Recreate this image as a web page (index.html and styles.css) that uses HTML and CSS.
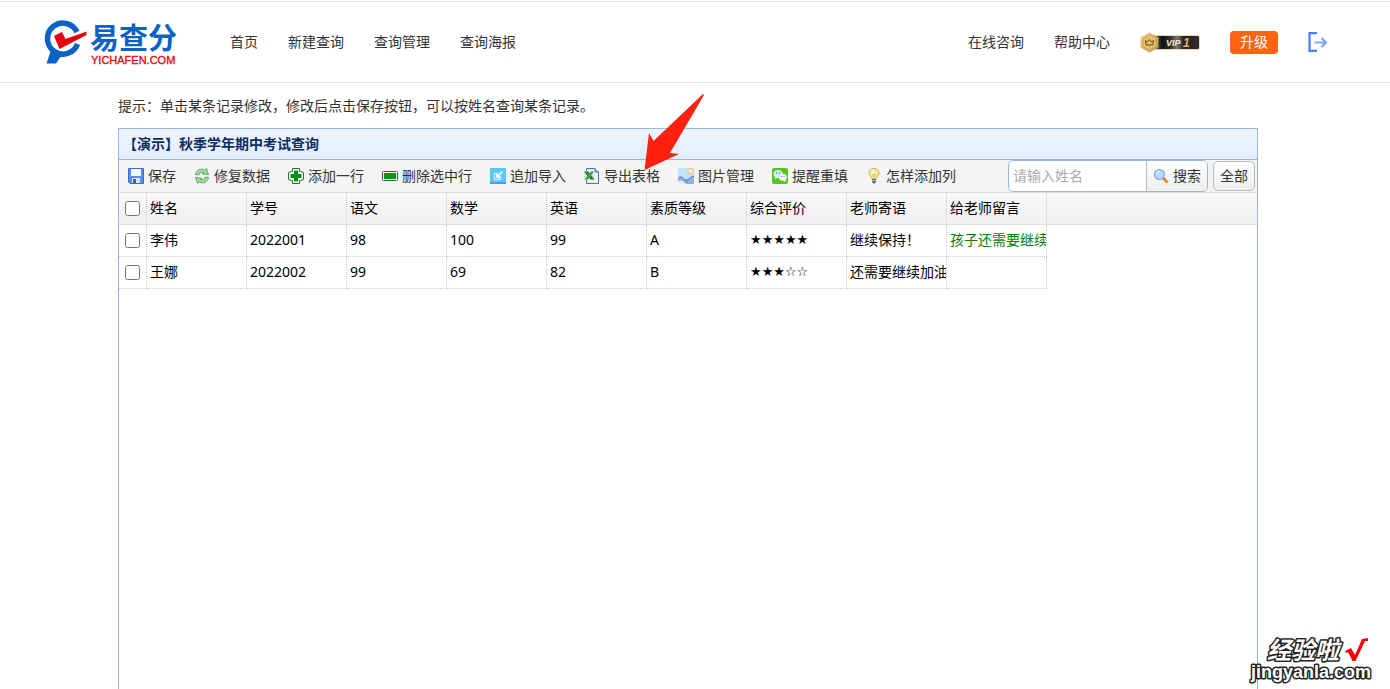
FILE: index.html
```
<!DOCTYPE html>
<html lang="zh-CN">
<head>
<meta charset="utf-8">
<title>易查分 - 查询管理</title>
<link rel="stylesheet" href="styles.css">
</head>
<body>
<header class="site-header">
  <a class="logo" href="#" aria-label="易查分">
    <svg width="140" height="48" viewBox="0 0 140 48">
      <path d="M35 14 A15.500 15.500 0 1 0 35.500 26" fill="none" stroke="#0a62c4" stroke-width="5.500"/>
      <path d="M9 32 L24 37.500 L18 39.500 L14 45.500 L4.500 45.500 Z" fill="#0a62c4"/>
      <path d="M12 18 L20 14 L23.500 21 L44.500 13.500 L44.500 17 L17.500 31 Z" fill="#e60012"/>
      <text class="logo-name" x="48" y="31">易查分</text>
      <text class="logo-domain" x="49" y="46">YICHAFEN.COM</text>
    </svg>
  </a>
  <nav class="nav">
    <a href="#">首页</a>
    <a href="#">新建查询</a>
    <a href="#">查询管理</a>
    <a href="#">查询海报</a>
  </nav>
  <div class="account">
    <a href="#">在线咨询</a>
    <a href="#">帮助中心</a>
    <svg class="vip" width="60" height="22" viewBox="0 0 60 22">
      <defs>
        <linearGradient id="vipBar"><stop offset="0" stop-color="#999"/><stop offset=".25" stop-color="#111"/><stop offset=".42" stop-color="#333"/><stop offset=".55" stop-color="#777"/><stop offset=".68" stop-color="#222"/><stop offset="1" stop-color="#2c2c2c"/></linearGradient>
        <linearGradient id="vipGold" x2="1" y2="1"><stop offset="0" stop-color="#efd591"/><stop offset="1" stop-color="#bd8d3c"/></linearGradient>
      </defs>
      <rect x="10" y="4.500" width="49.500" height="14" rx="2" fill="url(#vipBar)" stroke="#e8d7b4"/>
      <path d="M9.500 1.500 L18.500 6.500 V16.500 L9.500 21.500 L.5 16.500 V6.500 Z" fill="url(#vipGold)"/>
      <path d="M9.500 4 L16 7.700 V15.300 L9.500 19 L3 15.300 V7.700 Z" fill="#e5c072" stroke="#d2a655"/>
      <path d="M5.500 9.500 L7.500 11 L9.500 8.500 L11.500 11 L13.500 9.500 L12.800 14 H6.200 Z" fill="none" stroke="#6b4a16"/>
      <text class="vip-text" x="26" y="15">VIP</text>
      <text class="vip-level" x="43" y="16">1</text>
    </svg>
    <button class="upgrade" type="button">升级</button>
    <a class="logout" href="#" aria-label="退出">
      <svg width="20" height="20" viewBox="0 0 20 20" fill="none">
        <path d="M9 1.200 H1.500 V18.800 H9" stroke="#4a7cf7" stroke-width="2.200"/>
        <path d="M6.500 10.500 H18 M13.500 6 L18 10.500 L13.500 15" stroke="#80a4fa" stroke-width="2.200"/>
      </svg>
    </a>
  </div>
</header>

<main class="main">
  <p class="hint">提示：单击某条记录修改，修改后点击保存按钮，可以按姓名查询某条记录。</p>
  <section class="panel">
    <h1 class="panel-title">【演示】秋季学年期中考试查询</h1>
    <div class="toolbar">
      <div class="tools">
        <button class="tool" type="button">
          <svg width="16" height="16" viewBox="0 0 16 16"><path d="M.5 .5 H15.500 V15.500 H2 L.5 14 Z" fill="#5b8def" stroke="#3f6ccb"/><path d="M3 1 H13 V8 H3 Z" fill="#f4f8ff"/><path d="M4 10 H12 V15 H4 Z" fill="#dbe6f8"/><path d="M5 11 H8 V15 H5 Z" fill="#3b62ad"/></svg>
          保存</button>
        <button class="tool" type="button">
          <svg width="16" height="16" viewBox="0 0 16 16" fill="#a3dc98" stroke="#4a9a50" stroke-width=".8"><path d="M1.500 6.500 C2.500 1.500 7 0 10.500 2 L12.500 .5 L14.500 6.500 L8 6 L9.500 4.500 C7 3.800 5.500 4.500 5 7 Z"/><path d="M14.500 9.500 C13.500 14.500 9 16 5.500 14 L3.500 15.500 L1.500 9.500 L8 10 L6.500 11.500 C9 12.200 10.500 11.500 11 9 Z"/></svg>
          修复数据</button>
        <button class="tool" type="button">
          <svg width="16" height="16" viewBox="0 0 16 16"><path d="M4.500 .5 H11.500 V3.500 H12.500 L15.500 4.500 V11.500 L12.500 12.500 H11.500 V15.500 H4.500 V12.500 H3.500 L.5 11.500 V4.500 L3.500 3.500 H4.500 Z" fill="#fff" stroke="#23702b"/><path d="M6 2.500 H10 V6 H13.500 V10 H10 V13.500 H6 V10 H2.500 V6 H6 Z" fill="#0a9013"/></svg>
          添加一行</button>
        <button class="tool" type="button">
          <svg width="16" height="16" viewBox="0 0 16 16"><rect x=".5" y="3.500" width="15" height="9" rx="1" fill="#fff" stroke="#23702b"/><path d="M2 5 H14 V11 H2 Z" fill="#129318"/></svg>
          删除选中行</button>
        <button class="tool" type="button">
          <svg width="16" height="16" viewBox="0 0 16 16"><path d="M0 0 H16 V16 H0 Z" fill="#5cc8f8"/><path d="M0 14 H16 V16 H0 Z" fill="#3aa5e4"/><path d="M8 5.500 H4.500 V11.500 H10.500 V9" fill="none" stroke="#c8ecfd" stroke-width="1.300"/><path d="M12.500 3.500 L8 8 M7 5.500 V9 H10.500" fill="none" stroke="#fff" stroke-width="1.600"/></svg>
          追加导入</button>
        <button class="tool" type="button">
          <svg width="16" height="16" viewBox="0 0 16 16"><path d="M2.500 .5 H11 L14.500 4 V15.500 H2.500 Z" fill="#eaf2fd" stroke="#4774b5"/><path d="M11 .5 V4 H14.500" fill="#aac6ee" stroke="#4774b5"/><path d="M0 3 H10 V12 H0 Z" fill="#d5ebcf"/><path d="M0 3.500 H4 L10.500 11.500 H6.500 Z" fill="#2b7a36"/><path d="M10 3.500 H7 L.5 11.500 H4 Z" fill="#4b9b4d"/></svg>
          导出表格</button>
        <button class="tool" type="button">
          <svg width="16" height="16" viewBox="0 0 16 16"><path d="M0 0 H16 V16 H0 Z" fill="#c4e4fa"/><circle cx="12.500" cy="3" r="2.800" fill="#fff0d2" stroke="#f3b98a"/><path d="M0 11 Q3 6 7 11 Q12 11 16 7 V16 H0 Z" fill="#8fb2e4"/><path d="M0 10.500 Q3 7 6 11 L10 15 M7 12 Q10 14 12 9.500 L16 8.500" fill="none" stroke="#5c83c4"/><path d="M0 13 Q4 11 8 16 H0 Z" fill="#e1edfb"/></svg>
          图片管理</button>
        <button class="tool" type="button">
          <svg width="16" height="16" viewBox="0 0 16 16"><rect width="16" height="16" rx="2.500" fill="#54c51c"/><path d="M2.500 11 L3 9 A4.700 4 0 1 1 6 10 Z" fill="#d9ecfb"/><path d="M14 14 L13.500 12 A4.200 3.500 0 1 0 11 12.800 Z" fill="#f5faff" stroke="#a9d59a" stroke-width=".5"/><g fill="#4a8a55"><circle cx="4.500" cy="5" r=".7"/><circle cx="7.500" cy="5" r=".7"/><circle cx="9.500" cy="8.500" r=".6"/><circle cx="12" cy="8.500" r=".6"/></g></svg>
          提醒重填</button>
        <button class="tool" type="button">
          <svg width="16" height="16" viewBox="0 0 16 16"><path d="M8 .5 C4.500 .5 3 3 3 5 C3 8 5.500 8.500 6 11 H10 C10.500 8.500 13 8 13 5 C13 3 11.500 .5 8 .5 Z" fill="#f7ed98" stroke="#b8a868" stroke-width=".9"/><path d="M5.500 2.500 Q7 1.500 8 2 L6 6 Z" fill="#fffde0"/><path d="M7.500 11 L7 6 L8 7 L9 6 L8.500 11" fill="none" stroke="#cfae45" stroke-width=".6"/><path d="M6 11 H10 V14 L9 15.500 H7 L6 14 Z" fill="#68737e"/><path d="M6 12.500 H10" stroke="#c6cdd3" stroke-width=".7"/></svg>
          怎样添加列</button>
      </div>
      <form class="search">
        <div class="search-box">
          <input class="search-input" type="text" placeholder="请输入姓名" aria-label="姓名">
          <button class="search-button" type="button">
            <svg width="16" height="16" viewBox="0 0 16 16"><path d="M10.500 10.500 L14.500 14.500" stroke="#e08a2c" stroke-width="2.800"/><path d="M9.500 9.500 L11 11" stroke="#777" stroke-width="1.500"/><circle cx="6.500" cy="6.500" r="5" fill="#b7dcfb" stroke="#7fa6d6" stroke-width="1.200"/><path d="M3 6 Q3.500 3 6.500 2.800 Q6 5 3 6 Z" fill="#f1f9ff"/></svg>
            搜索</button>
        </div>
        <button class="all-button" type="button">全部</button>
      </form>
    </div>
    <table class="grid">
      <colgroup><col class="col-check"><col class="col-data" span="9"><col></colgroup>
      <thead>
        <tr><th class="check"><input type="checkbox" aria-label="全选"></th><th>姓名</th><th>学号</th><th>语文</th><th>数学</th><th>英语</th><th>素质等级</th><th>综合评价</th><th>老师寄语</th><th>给老师留言</th><th class="filler"></th></tr>
      </thead>
      <tbody>
        <tr><td class="check"><input type="checkbox" aria-label="选择李伟"></td><td>李伟</td><td>2022001</td><td>98</td><td>100</td><td>99</td><td>A</td><td class="stars">★★★★★</td><td>继续保持！</td><td class="message">孩子还需要继续</td><td class="filler"></td></tr>
        <tr><td class="check"><input type="checkbox" aria-label="选择王娜"></td><td>王娜</td><td>2022002</td><td>99</td><td>69</td><td>82</td><td>B</td><td class="stars">★★★☆☆</td><td>还需要继续加油</td><td></td><td class="filler"></td></tr>
      </tbody>
    </table>
  </section>
</main>

<svg class="arrow" width="62" height="78" viewBox="0 0 62 78"><path d="M60 1 L61 2 L27 60 L36 61 L1.500 77 L6 40 L10.500 48 Z" fill="#ff2010"/></svg>

<svg class="watermark" width="130" height="54" viewBox="0 0 130 54">
  <text class="mark-name" x="19" y="24">经验啦</text>
  <text class="mark-domain" x="3" y="43">jingyanla.com</text>
  <path d="M97 16 L103 13 L107 20 L114 4 L120 3 L120 6 L117 6 L107.500 26 L104.500 26 L100 17 L98 18 Z" fill="#ff0000"/>
</svg>
</body>
</html>
```
FILE: styles.css
```
* {
  box-sizing: border-box;
}

body {
  margin: 0;
  min-height: 100vh;
  display: flex;
  flex-direction: column;
  position: relative;
  overflow: hidden;
  background: #fff;
  color: #333;
  font: 14px/20px "Noto Sans", "Noto Sans CJK SC", sans-serif;
}

button,
input {
  font: inherit;
  color: inherit;
}

a {
  color: inherit;
  text-decoration: none;
}

svg {
  display: block;
  flex: none;
}

.site-header {
  display: flex;
  align-items: center;
  height: 82px;
  margin-top: 1px;
  padding: 0 62px 0 42px;
  border-top: 1px solid #e6e6e6;
  border-bottom: 1px solid #e6e6e6;
}

.logo-name {
  font: bold 29px "Noto Sans CJK SC", sans-serif;
  fill: #0a62c4;
}

.logo-domain {
  font: 11px "Liberation Sans", sans-serif;
  fill: #e60012;
  stroke: #e60012;
  stroke-width: 0.3;
}

.nav,
.account {
  display: flex;
  align-items: center;
  gap: 30px;
}

.nav {
  margin-left: 48px;
}

.account {
  margin-left: auto;
}

.vip-text {
  font: italic bold 9px "Liberation Sans", sans-serif;
  fill: #f4e6c8;
}

.vip-level {
  font: italic bold 12px "Liberation Sans", sans-serif;
  fill: #e6b95c;
}

.upgrade {
  width: 48px;
  height: 23px;
  padding: 0 0 2px;
  border: 0;
  border-radius: 4px;
  background: #ff6410;
  color: #fff;
  line-height: 21px;
}

.main {
  flex: 1;
  display: flex;
  flex-direction: column;
  width: 100%;
  max-width: 1154px;
  margin: 0 auto;
  padding-right: 14px;
}

.hint {
  margin: 0;
  padding: 13px 0 12px;
}

.panel {
  flex: 1;
  border: 1px solid #95b8e7;
  border-bottom: 0;
}

.panel-title {
  margin: 0;
  padding: 5px 4px;
  border-bottom: 1px solid #95b8e7;
  background: linear-gradient(#eff5ff, #e0ecff);
  color: #0e2d5f;
  font-size: 14px;
  line-height: 20px;
}

.toolbar {
  display: flex;
  justify-content: space-between;
  align-items: center;
  height: 33px;
  padding: 0 2px 0 9px;
  border-bottom: 1px solid #ddd;
  background: #f4f4f4;
}

.tools {
  display: flex;
  gap: 18px;
}

.tool {
  display: flex;
  align-items: center;
  gap: 4px;
  padding: 0;
  border: 0;
  background: none;
  white-space: nowrap;
}

.search {
  display: flex;
  align-items: center;
  gap: 5px;
  height: 32px;
}

.search-box {
  display: flex;
  width: 200px;
  height: 32px;
  border: 1px solid #95b8e7;
  border-radius: 5px;
  background: #fff;
  overflow: hidden;
}

.search-input {
  flex: 1;
  min-width: 0;
  padding: 0 4px;
  border: 0;
  background: none;
}

.search-input::placeholder {
  color: #aaa;
}

.search-button {
  display: flex;
  align-items: center;
  gap: 4px;
  width: 61px;
  padding: 0 5px 0 6px;
  border: 0;
  border-left: 1px solid #bbb;
  background: linear-gradient(#fff, #eee);
  white-space: nowrap;
}

.all-button {
  width: 42px;
  height: 30px;
  padding: 0;
  border: 1px solid #bbb;
  border-radius: 5px;
  background: linear-gradient(#fff, #eee);
}

.grid {
  width: 100%;
  table-layout: fixed;
  border-collapse: separate;
  border-spacing: 0;
  color: #000;
}

.col-check {
  width: 28px;
}

.col-data {
  width: 100px;
}

.grid th,
.grid td {
  height: 32px;
  padding: 0 0 2px 3px;
  border-right: 1px dotted #ccc;
  border-bottom: 1px dotted #ccc;
  font-weight: normal;
  text-align: left;
  white-space: nowrap;
  overflow: hidden;
}

.grid thead {
  background: linear-gradient(#f9f9f9, #efefef);
}

.grid th {
  border-bottom: 1px solid #ddd;
}

.grid .check {
  padding: 0 0 0 6px;
}

.grid .check input {
  display: block;
  width: 15px;
  height: 15px;
  margin: 0;
}

.grid .filler {
  border-right: 0;
}

.grid td.filler {
  border-bottom: 0;
}

.grid .stars {
  font-family: "DejaVu Sans", sans-serif;
  font-size: 13px;
}

.grid .message {
  color: #008000;
}

.arrow {
  position: absolute;
  left: 643px;
  top: 93px;
}

.watermark {
  position: absolute;
  right: 12px;
  bottom: 0;
}

.mark-name,
.mark-domain {
  fill: #fff;
  stroke: #222;
  stroke-width: 3;
  stroke-linejoin: round;
  paint-order: stroke;
}

.mark-name {
  font: italic bold 24px "Noto Sans CJK SC", sans-serif;
}

.mark-domain {
  font: bold 18px "Liberation Sans", sans-serif;
}
```
